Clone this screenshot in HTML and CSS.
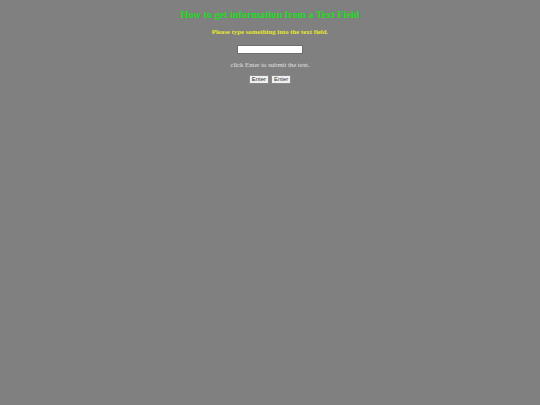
FILE: index.html
```html
<!DOCTYPE html>
<html>
<head>
<meta charset="utf-8">
<link rel="stylesheet" href="styles.css">
</head>
<body>
<div class="page">
  <h1 class="title">How to get information from a Text Field</h1>
  <p class="prompt">Please type something into the text field.</p>
  <input class="field" type="text">
  <p class="hint">click Enter to submit the text.</p>
  <div class="buttons">
    <button class="btn">Enter</button>
    <button class="btn">Enter</button>
  </div>
</div>
</body>
</html>
```
FILE: styles.css
```css
html, body {
  margin: 0;
  padding: 0;
  background: #808080;
  height: 100%;
}
.page {
  display: flex;
  flex-direction: column;
  align-items: center;
  font-family: "Liberation Serif", serif;
  padding-top: 8px;
}
.title {
  margin: 0;
  font-size: 10.2px;
  font-weight: bold;
  color: #1edc1e;
  line-height: 14px;
}
.prompt {
  margin: 5px 0 0;
  font-size: 6.8px;
  font-weight: bold;
  color: #e6e62e;
  line-height: 9px;
}
.field {
  margin-top: 9px;
  width: 66px;
  height: 9px;
  box-sizing: border-box;
  border: 1px solid #6e6e6e;
  background: #fff;
  padding: 0;
}
.hint {
  margin: 6px 0 0;
  font-size: 6.7px;
  color: #e0e0e0;
  line-height: 9px;
}
.buttons {
  margin-top: 6px;
  display: flex;
  gap: 2px;
}
.btn {
  font-family: "Liberation Sans", sans-serif;
  font-size: 6px;
  height: 9px;
  padding: 0 2px;
  line-height: 7px;
  background: #efefef;
  border: 1px solid #8a8a8a;
  color: #333;
  border-radius: 1px;
}
```
